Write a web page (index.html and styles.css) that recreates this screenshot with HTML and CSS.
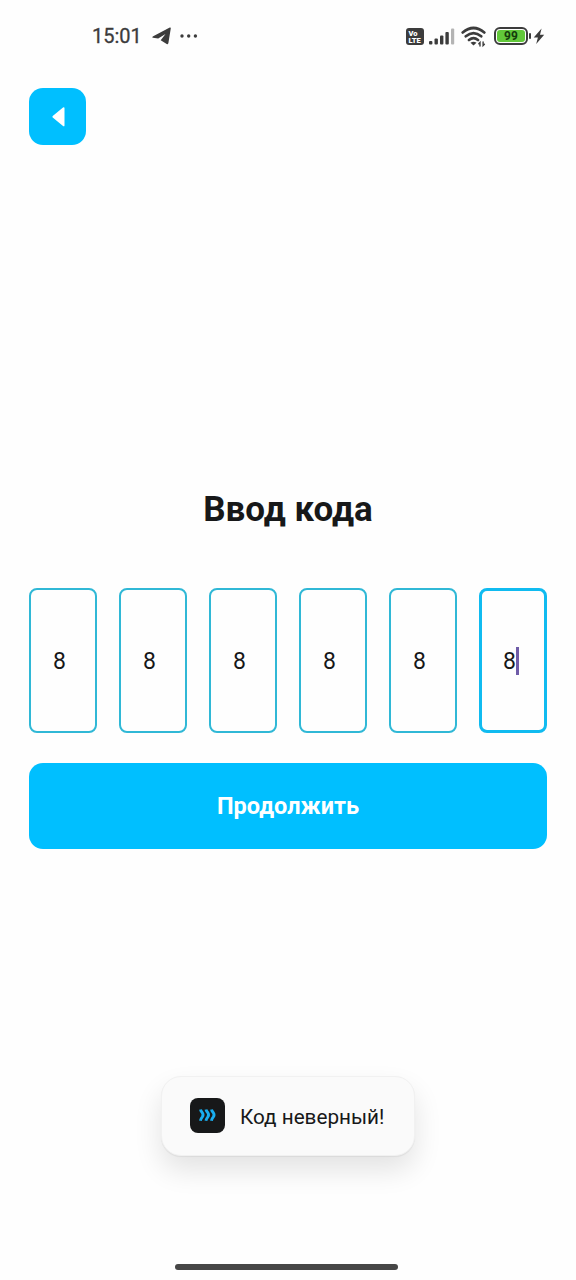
FILE: index.html
```html
<!DOCTYPE html>
<html lang="ru">
<head>
<meta charset="utf-8">
<title>Ввод кода</title>
<link rel="stylesheet" href="styles.css">
</head>
<body>
<div class="screen">
  <header class="status">
    <div class="status-left">
      <span class="time">15:01</span>
      <svg class="plane" width="20" height="18" viewBox="0 0 20 18"><path d="M18.800 1.200 16.400 16.100c-.2 1.100-.9 1.300-1.700.8L8.700 13.300 13.500 7 6.200 11.600 1 10.800c-1-.3-1-1 .2-1.600L17.300 .7c1-.5 1.600-.3 1.500.5Z" fill="#3c3c3c"/></svg>
      <svg class="dots" width="18" height="4" viewBox="0 0 18 4" fill="#3c3c3c"><circle cx="2" cy="2" r="1.700"/><circle cx="8.700" cy="2" r="1.700"/><circle cx="15.400" cy="2" r="1.700"/></svg>
    </div>
    <div class="status-right">
      <div class="volte"><span>Vo</span><span>LTE</span></div>
      <svg class="signal" width="26" height="17" viewBox="0 0 26 17" fill="#3c3c3c"><rect x="0" y="13" width="3.400" height="3.500" rx="1"/><rect x="5.500" y="10.500" width="3.400" height="6" rx="1"/><rect x="11" y="7.500" width="3.400" height="9" rx="1"/><rect x="16.400" y="4" width="3.400" height="12.500" rx="1"/><rect x="22" y="0.500" width="3.200" height="16" rx="1" fill="#b4b4b4"/></svg>
      <svg class="wifi" width="26" height="22" viewBox="0 0 26 22" fill="none" stroke="#3c3c3c" stroke-width="2.700" stroke-linecap="round"><path d="M1.700 6.500Q12.500-2.500 23.300 6.500M4.800 10.300Q12.500 3.800 20.200 10.300M8 14Q12.500 10.200 17 14"/><path d="M9.500 16.800Q12.500 14.600 15.500 16.800L12.500 19.500Z" fill="#3c3c3c" stroke="none"/><path d="M19 20v-3.500l-1.200 1.300M22.100 16v3.500l1.300-1.300" stroke-width="1.400"/></svg>
      <div class="battery"><span class="charge">99</span></div>
      <svg class="bolt" width="12" height="17" viewBox="0 0 12 17"><path d="M8.600.5.700 9.500h4.200L3.200 16l8-9.300H7Z" fill="#3c3c3c"/></svg>
    </div>
  </header>
  <main class="content">
    <button class="back" aria-label="Назад">
      <svg width="14" height="22" viewBox="0 0 14 22"><path d="M12.600 2.200v17.200L2.300 10.800Z" fill="#fff" stroke="#fff" stroke-width="1.800" stroke-linejoin="round"/></svg>
    </button>
    <h1 class="title">Ввод кода</h1>
    <div class="code">
      <div class="cell">8</div>
      <div class="cell">8</div>
      <div class="cell">8</div>
      <div class="cell">8</div>
      <div class="cell">8</div>
      <div class="cell active">8<i class="caret"></i></div>
    </div>
    <button class="submit">Продолжить</button>
    <div class="toast">
      <svg class="app" width="35" height="35" viewBox="0 0 35 35"><rect width="35" height="35" rx="8" fill="#171819"/><path d="M10.500 11.500q.3 1.500 1.700 3 1.700 2.400 0 4.600-1.500 1.800-1.800 3.700M16 11.500q.3 1.500 1.700 3 1.700 2.400 0 4.600-1.500 1.800-1.800 3.700M21.500 11.500q.3 1.500 1.700 3 1.700 2.400 0 4.600-1.500 1.800-1.800 3.700" fill="none" stroke="#19aef0" stroke-width="2.900"/></svg>
      <span class="message">Код неверный!</span>
    </div>
  </main>
  <div class="home"></div>
</div>
</body>
</html>
```
FILE: styles.css
```css
* { box-sizing: border-box; }
body { margin: 0; background: #fefefe; font-family: Roboto, "Liberation Sans", sans-serif; color: #171819; }
.screen { width: 576px; height: 1280px; overflow: hidden; display: flex; flex-direction: column; }
.status { height: 72px; padding: 0 31px 0 92px; display: flex; justify-content: space-between; align-items: center; color: #3c3c3c; }
.status-left, .status-right { display: flex; align-items: center; }
.time { font-size: 20px; line-height: 24px; font-weight: 400; -webkit-text-stroke: .3px #3c3c3c; }
.plane { margin-left: 10px; }
.dots { margin-left: 8px; }
.volte { width: 18px; height: 17px; border-radius: 3px; background: #3c3c3c; color: #fff; font-size: 7.5px; line-height: 7px; font-weight: 900; padding: 2px 0 0 2.500px; display: flex; flex-direction: column; }
.signal { margin-left: 5px; }
.wifi { margin: 1px 0 0 6px; }
.battery { position: relative; width: 34px; height: 18px; margin-left: 7px; padding: 1px; border: 2px solid #3c3c3c; border-radius: 6px; }
.battery::after { content: ""; position: absolute; right: -5px; top: 4px; width: 2px; height: 6px; border-radius: 1px; background: #3c3c3c; }
.charge { display: block; height: 12px; border-radius: 3px; background: #62c83a; color: #143c0c; font-size: 12px; line-height: 13px; font-weight: 700; text-align: center; }
.bolt { margin-left: 5px; }
.content { flex: 1; padding: 16px 29px 0; display: flex; flex-direction: column; }
.back { width: 57px; height: 57px; padding: 0; border: 0; border-radius: 14px; background: #00bfff; display: flex; align-items: center; justify-content: center; }
.title { margin: 342px 0 0; font-size: 35px; line-height: 45px; font-weight: 700; text-align: center; }
.code { margin-top: 56px; display: flex; justify-content: space-between; }
.cell { width: 68px; height: 145px; padding: 2px 0 0 22px; border: 2px solid #30b8d6; border-radius: 8px; display: flex; align-items: center; font-size: 23px; line-height: 28px; }
.cell.active { border: 3px solid #10bbf0; padding-left: 21px; }
.caret { width: 3px; height: 28px; margin-bottom: 2px; background: #6f5ca8; }
.submit { margin-top: 30px; height: 86px; padding: 0; border: 0; border-radius: 14px; background: #00bfff; color: #fff; font: 700 23.500px/27px Roboto, sans-serif; text-align: center; }
.toast { align-self: center; margin-top: 227px; width: 254px; height: 80px; padding: 0 0 2px 28px; border: 1px solid #f1f1f1; border-radius: 20px; background: #fafafa; box-shadow: 0 14px 28px rgba(0,0,0,.11), 0 1px 1px rgba(0,0,0,.06); display: flex; align-items: center; gap: 15px; font-size: 20.700px; line-height: 26px; white-space: nowrap; }
.message { padding-top: 3px; }
.home { width: 223px; height: 6px; margin: 0 0 10px 175px; border-radius: 3px; background: #464646; }
```
